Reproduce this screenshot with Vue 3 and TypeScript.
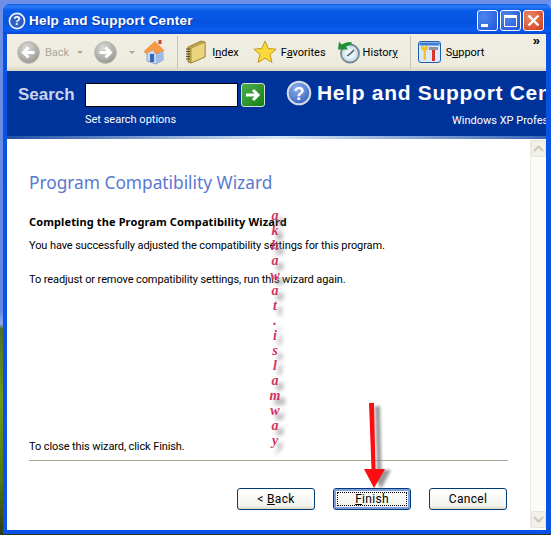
<template>
  <div class="desktop">
    <div class="window">
      <div class="titlebar">
        <svg class="title-icon" width="18" height="18" viewBox="0 0 18 18">
          <circle cx="9" cy="9" r="7.6" fill="#2f5fc4" stroke="#eef2fb" stroke-width="1.6" />
          <text x="9" y="13.400" text-anchor="middle" class="q">?</text>
        </svg>
        <span class="title-text">Help and Support Center</span>
        <div class="win-buttons">
          <button class="win-btn"><span class="min-glyph"></span></button>
          <button class="win-btn"><span class="max-glyph"></span></button>
          <button class="win-btn close">
            <svg width="13" height="13" viewBox="0 0 13 13"><path d="M1.500 1.500l10 10M11.500 1.500l-10 10" stroke="#fff" stroke-width="2.400" /></svg>
          </button>
        </div>
      </div>

      <div class="toolbar">
        <div class="tool back">
          <svg width="23" height="23" viewBox="0 0 23 23">
            <defs>
              <radialGradient id="grey" cx="40%" cy="30%" r="75%"><stop offset="0" stop-color="#dcdcd8" /><stop offset="1" stop-color="#96968f" /></radialGradient>
            </defs>
            <circle cx="11.500" cy="11.500" r="10.800" fill="url(#grey)" stroke="#b5b5ae" />
            <path d="M17.500 11.500H7M11.500 6.500l-5 5 5 5" fill="none" stroke="#fff" stroke-width="3" />
          </svg>
          <span class="muted">Back</span>
          <i class="caret"></i>
        </div>
        <div class="tool forward">
          <svg width="23" height="23" viewBox="0 0 23 23">
            <circle cx="11.500" cy="11.500" r="10.800" fill="url(#grey)" stroke="#b5b5ae" />
            <path d="M5.500 11.500H16M11.500 6.500l5 5-5 5" fill="none" stroke="#fff" stroke-width="3" />
          </svg>
          <i class="caret"></i>
        </div>
        <svg class="home" width="23" height="25" viewBox="0 0 23 25">
          <path d="M4 12l8-6 8 6v8l-7 4-9-3z" fill="#c6d9f4" stroke="#6f93cc" stroke-width=".8" />
          <path d="M13 13l7-1v8l-7 4z" fill="#9dbce8" />
          <rect x="7" y="14" width="4" height="8" fill="#3767b8" />
          <path d="M1 11.500L12 1.500l9 9-8 3.500-3-4.500-7 4z" fill="#f79b42" stroke="#e07f2c" stroke-width=".6" />
          <rect x="15.500" y="0" width="3" height="4" fill="#c6452c" />
        </svg>
        <span class="sep"></span>
        <div class="tool index">
          <svg width="21" height="24" viewBox="0 0 21 24">
            <path d="M3 7L16 1l4 1v15L6 23l-3-1z" fill="#c8a94c" stroke="#8a7330" stroke-width=".8" />
            <path d="M6 8l14-6v15L6 23z" fill="#ead57e" stroke="#9c8538" stroke-width=".8" />
            <path d="M1 9h4M1 11.500h4M1 14h4M1 16.500h4M1 19h4" stroke="#50503c" stroke-width="1.200" />
          </svg>
          <span>I<u>n</u>dex</span>
        </div>
        <div class="tool favorites">
          <svg width="24" height="24" viewBox="0 0 24 24">
            <path d="M12 1l3.200 7.500 8 .7-6.100 5.300 1.900 8L12 18.200 5 22.500l1.900-8L.8 9.200l8-.7z" fill="#fbd93d" stroke="#c59a1c" />
          </svg>
          <span>F<u>a</u>vorites</span>
        </div>
        <div class="tool history">
          <svg width="23" height="23" viewBox="0 0 23 23">
            <circle cx="13" cy="12.500" r="9" fill="#cfe4ee" stroke="#76858e" stroke-width="1.800" />
            <circle cx="13" cy="12.500" r="5.500" fill="#e8f3f7" />
            <path d="M13 13l4-4M13 13l-3 2" stroke="#465058" stroke-width="1.400" />
            <path d="M7 2.500a9 9 0 0 1 8-1l-1 2.500a6 6 0 0 0-5 1.500l2 3H1l1-8 2.500 3z" fill="#1f9036" />
          </svg>
          <span>Histor<u>y</u></span>
        </div>
        <span class="sep"></span>
        <div class="tool support">
          <svg width="23" height="22" viewBox="0 0 23 22">
            <rect x=".5" y=".5" width="22" height="21" rx="2.500" fill="#dce9f8" stroke="#1f5bb0" />
            <rect x="1.500" y="1.500" width="20" height="3" fill="#3f7cd0" />
            <path d="M5.500 6h2.500v13H5.500z" fill="#f4c22c" />
            <path d="M3 5h2l1.500 2L8 5h2v3l-2 2H5.500L3 8z" fill="#f4c22c" />
            <path d="M11 6h9v3h-9z" fill="#8a929c" />
            <rect x="14" y="9" width="3" height="11" fill="#d8352a" />
          </svg>
          <span>S<u>u</u>pport</span>
        </div>
        <span class="more">»</span>
      </div>

      <div class="banner">
        <div class="search-block">
          <div class="search-row">
            <span class="search-label">Search</span>
            <input class="search-input" type="text" />
            <button class="go">
              <svg width="16" height="16" viewBox="0 0 16 16"><path d="M1 8h11M8 3l5 5-5 5" fill="none" stroke="#fff" stroke-width="3" /></svg>
            </button>
          </div>
          <div class="search-options">Set search options</div>
        </div>
        <div class="brand">
          <div class="brand-row">
            <svg width="26" height="26" viewBox="0 0 26 26">
              <defs>
                <radialGradient id="qblue" cx="40%" cy="30%" r="75%"><stop offset="0" stop-color="#8fb0ea" /><stop offset="1" stop-color="#3463c0" /></radialGradient>
              </defs>
              <circle cx="13" cy="13" r="11.300" fill="url(#qblue)" stroke="#d6dce8" stroke-width="2" />
              <text x="13" y="19.500" text-anchor="middle" class="q big">?</text>
            </svg>
            <span class="brand-title">Help and Support Center</span>
          </div>
          <div class="brand-sub">Windows XP Professional</div>
        </div>
      </div>
      <div class="fade"></div>

      <div class="body">
        <div class="wizard">
          <h1>Program Compatibility Wizard</h1>
          <h2>Completing the Program Compatibility Wizard</h2>
          <p class="first">You have successfully adjusted the compatibility settings for this program.</p>
          <p class="second">To readjust or remove compatibility settings, run this wizard again.</p>
          <p class="close-hint">To close this wizard, click Finish.</p>
          <div class="divider"></div>
          <div class="actions">
            <button class="btn">&lt; <u>B</u>ack</button>
            <button class="btn primary"><span class="focus"><u>F</u>inish</span></button>
            <button class="btn">Cancel</button>
          </div>
          <div class="watermark">
            <span v-for="(c, i) in mark" :key="i">{{ c }}</span>
          </div>
        </div>
        <div class="scrollbar">
          <div class="sb-btn"><svg width="11" height="7" viewBox="0 0 11 7"><path d="M1 6l4.500-4.500L10 6" fill="none" stroke="#c9c8ba" stroke-width="2" /></svg></div>
          <div class="sb-btn"><svg width="11" height="7" viewBox="0 0 11 7"><path d="M1 1l4.500 4.500L10 1" fill="none" stroke="#c9c8ba" stroke-width="2" /></svg></div>
        </div>
      </div>
    </div>

    <svg class="arrow" width="40" height="92" viewBox="0 0 40 92">
      <defs><filter id="blur"><feGaussianBlur stdDeviation="1.500" /></filter></defs>
      <g fill="#777" opacity=".75" filter="url(#blur)">
        <path d="M9 0h5l1.500 66H11z" transform="translate(6 3)" />
        <path d="M4 66h20L14 85z" transform="translate(7 1)" />
      </g>
      <path d="M9 0h5l1.500 66h9.500L14 85 4 66h7.500z" fill="#fb0d12" />
    </svg>
  </div>
</template>

<script setup lang="ts">
const mark = 'akhawat.islamway'.split('')
</script>

<style>
html, body { margin: 0; padding: 0; }
</style>

<style scoped>
.desktop {
  position: relative;
  width: 551px;
  height: 535px;
  overflow: hidden;
  padding: 4px 0 1px 3px;
  box-sizing: border-box;
  background: linear-gradient(180deg, #6d8fe6 0, #5f86e2 58%, #89a8ea 60.500%, #4f6c2a 61.500%, #6f9a18 75%, #4f7612 90%, #2c3a18 100%);
  font-family: Roboto, "Liberation Sans", sans-serif;
  font-size: 11px;
  color: #000;
}

.window {
  height: 100%;
  display: flex;
  flex-direction: column;
  background: #0a52e6;
  border-radius: 7px 7px 0 0;
  padding: 0 5px 4px 4px;
  box-sizing: border-box;
  overflow: hidden;
}

.titlebar {
  height: 30px;
  flex: none;
  display: flex;
  align-items: center;
  margin: 0 -5px 0 -4px;
  padding: 3px 5px 0 5px;
  box-sizing: border-box;
  background: linear-gradient(180deg, #0a5be6 0, #2a7cf4 8%, #0a5ce8 22%, #0553e0 60%, #0a5cf0 88%, #0546c8 100%);
  color: #fff;
}

.title-icon { margin-right: 3px; }

.q {
  font: bold 12px "Liberation Sans", sans-serif;
  fill: #fff;
}

.q.big { font-size: 18px; }

.title-text {
  font: bold 13.500px "Liberation Sans", sans-serif;
  text-shadow: 1px 1px 0 #0f3a9e;
  letter-spacing: 0.2px;
}

.win-buttons {
  margin-left: auto;
  display: flex;
  gap: 2px;
  margin-right: 2px;
}

.win-btn {
  width: 21px;
  height: 21px;
  padding: 0;
  display: flex;
  align-items: center;
  justify-content: center;
  border: 1px solid #fff;
  border-radius: 3px;
  background: radial-gradient(circle at 30% 30%, #4f86ee, #1f56d8);
}

.win-btn.close { background: radial-gradient(circle at 30% 30%, #ea8a66, #cf3a1c); }

.min-glyph {
  width: 7px;
  height: 3px;
  background: #fff;
  margin: 9px 6px 0 0;
}

.max-glyph {
  width: 13px;
  height: 12px;
  border: 1px solid #fff;
  border-top-width: 3px;
  box-sizing: border-box;
}

.toolbar {
  height: 37px;
  flex: none;
  display: flex;
  align-items: center;
  position: relative;
  background: linear-gradient(180deg, #f0eee2 0, #eeecdf 85%, #d9d5c2 100%);
  padding-left: 10px;
  padding-bottom: 1px;
  box-sizing: border-box;
}

.tool {
  display: flex;
  align-items: center;
  gap: 5px;
  white-space: nowrap;
}

.muted { color: #a8a79c; }

.caret {
  width: 0;
  height: 0;
  border: 3px solid transparent;
  border-top: 3px solid #a9a89e;
  border-bottom: 0;
}

.back .caret { margin-left: 3px; }
.forward { margin-left: 11px; }
.forward .caret { margin-left: 7px; }
.home { margin-left: 8px; }

.sep {
  width: 1px;
  height: 33px;
  background: #c8c4ae;
}

.toolbar > .sep:nth-of-type(1) { margin-left: 11px; }
.index { margin-left: 7px; gap: 6px; }
.favorites { margin-left: 14px; gap: 4px; }
.history { margin-left: 11px; gap: 3px; }
.toolbar > .history + .sep { margin-left: 12px; }
.support { margin-left: 7px; gap: 5px; }

.more {
  position: absolute;
  top: -1px;
  right: 6px;
  font: bold 13px "Liberation Sans", sans-serif;
}

.banner {
  height: 65px;
  flex: none;
  background: #003399;
  display: flex;
  overflow: hidden;
  color: #fff;
  padding: 12px 0 0 11px;
  box-sizing: border-box;
}

.search-block { flex: none; width: 275px; }

.search-row {
  display: flex;
  align-items: center;
}

.search-label {
  width: 67px;
  font: bold 17px "Liberation Sans", sans-serif;
  color: #c9d4ee;
}

.search-input {
  width: 153px;
  height: 24px;
  box-sizing: border-box;
  border: 1px solid #000;
  background: #fff;
  padding: 0;
  margin-right: 3px;
}

.go {
  width: 24px;
  height: 24px;
  padding: 0;
  border: 1px solid #d8e2d0;
  border-radius: 3px;
  display: flex;
  align-items: center;
  justify-content: center;
  background: linear-gradient(135deg, #4fb04a, #127f18);
}

.search-options {
  margin: 6px 0 0 67px;
  line-height: 14px;
}

.brand {
  flex: none;
  margin-left: -7px;
  width: 400px;
  white-space: nowrap;
}

.brand-row {
  display: flex;
  align-items: center;
  gap: 5px;
  margin-top: -3px;
  height: 26px;
}

.brand-title {
  font: bold 21px "Liberation Sans", sans-serif;
  letter-spacing: 0.7px;
}

.brand-sub {
  margin: 8px 0 0 166px;
  line-height: 14px;
}

.fade {
  height: 3px;
  flex: none;
  background: linear-gradient(90deg, #1f4fa8 0, #d8e8f2 50%, #3a66b8 100%);
}

.body {
  flex: 1;
  display: flex;
  min-height: 0;
  background: #fff;
}

.wizard {
  flex: 1;
  position: relative;
  display: flex;
  flex-direction: column;
  padding: 32px 22px 20px 22px;
  box-sizing: border-box;
}

h1 {
  margin: 0;
  font-family: "Noto Sans", sans-serif;
  font-size: 17.300px;
  font-weight: 400;
  line-height: 24px;
  color: #5a78d0;
}

h2 {
  margin: 20px 0 0;
  font-family: "Noto Sans", sans-serif;
  font-size: 11px;
  font-weight: 700;
  line-height: 14px;
  letter-spacing: 0.12px;
}

p {
  margin: 0;
  line-height: 14px;
  letter-spacing: -0.1px;
}

.first { margin-top: 10px; }
.second { margin-top: 20px; }
.close-hint { margin-top: auto; }

.divider {
  height: 1px;
  background: #aca899;
  margin-top: 6px;
}

.actions {
  display: flex;
  justify-content: flex-end;
  gap: 18px;
  margin: 27px 1px 0 0;
}

.btn {
  width: 78px;
  height: 22px;
  padding: 0;
  border: 1px solid #003c74;
  border-radius: 3px;
  background: linear-gradient(180deg, #fff 0, #f3f2ea 85%, #dcd8c8 100%);
  font: inherit;
  font-size: 12px;
  letter-spacing: 0.3px;
  color: #000;
}

.btn.primary {
  box-shadow: inset 0 0 0 2px #7f9de0;
  padding: 3px;
}

.focus {
  display: block;
  height: 100%;
  border: 1px dotted #000;
  box-sizing: border-box;
  line-height: 12px;
}

.watermark {
  position: absolute;
  left: 260px;
  top: 69px;
  width: 16px;
  display: flex;
  flex-direction: column;
  align-items: center;
  font: italic bold 14px/15px "Liberation Serif", serif;
  color: #d0335f;
  text-shadow: 5px 5px 4px #888;
}

.scrollbar {
  width: 16px;
  flex: none;
  background: #fbfbf8;
  border-left: 1px solid #eeede5;
  box-sizing: border-box;
  display: flex;
  flex-direction: column;
  justify-content: space-between;
  padding: 1px 0 2px;
}

.sb-btn {
  height: 15px;
  border: 1px solid #e6e4d8;
  border-radius: 2px;
  background: #f2f1e8;
  display: flex;
  align-items: center;
  justify-content: center;
}

.arrow {
  position: absolute;
  left: 360px;
  top: 403px;
}
</style>
